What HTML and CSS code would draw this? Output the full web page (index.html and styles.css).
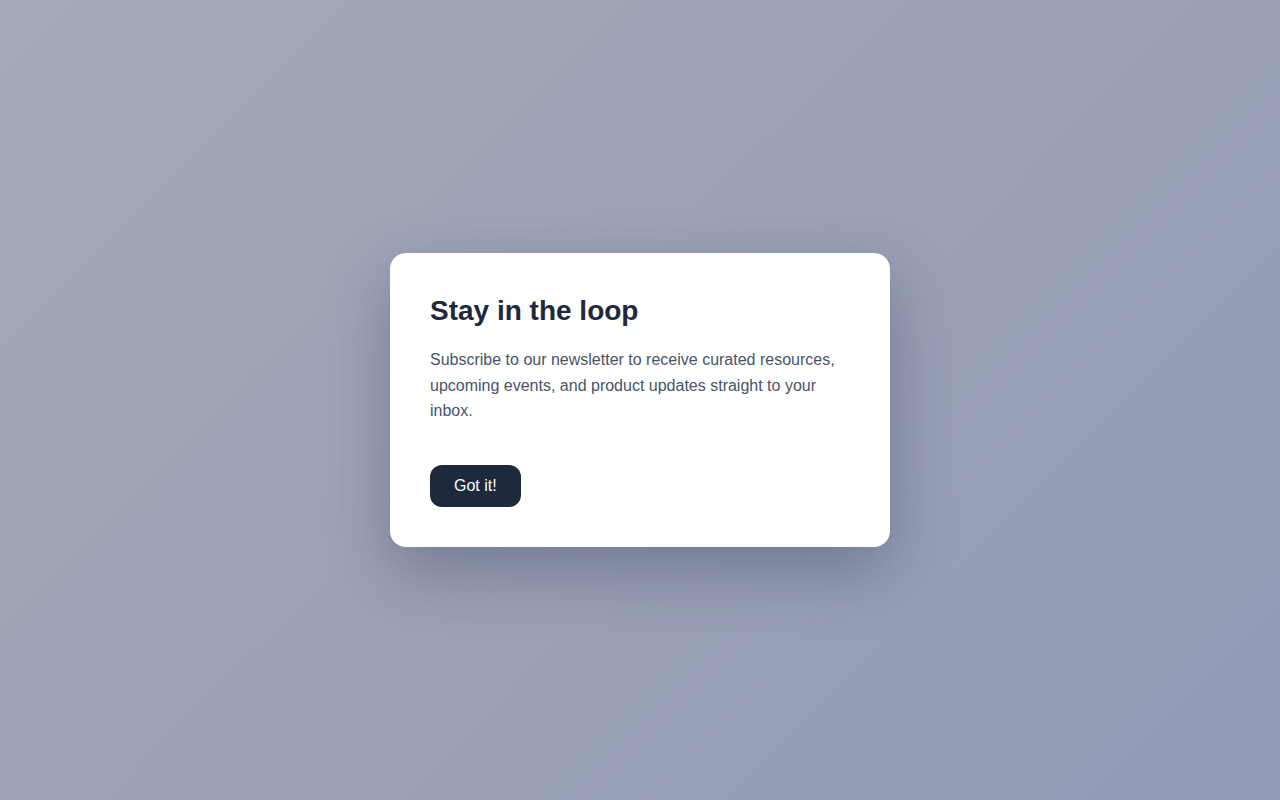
FILE: index.html
```html
<!DOCTYPE html>
<html lang="en">
<head>
<meta charset="utf-8">
<title>Stay in the loop</title>
<link rel="stylesheet" href="styles.css">
</head>
<body>
<div class="backdrop">
  <div class="card" role="dialog" aria-labelledby="t">
    <h1 id="t" class="title">Stay in the loop</h1>
    <p class="text">Subscribe to our newsletter to receive curated resources, upcoming events, and product updates straight to your inbox.</p>
    <button class="btn" type="button">Got it!</button>
  </div>
</div>
</body>
</html>
```
FILE: styles.css
```css
html, body {
  margin: 0;
  padding: 0;
  height: 100%;
}
body {
  font-family: "Liberation Sans", Arial, sans-serif;
}
.backdrop {
  height: 100vh;
  display: flex;
  align-items: center;
  justify-content: center;
  background: linear-gradient(135deg, #a4aab9 0%, #9ba2b6 50%, #929bb7 100%);
}
.card {
  width: 500px;
  box-sizing: border-box;
  padding: 40px;
  background: #ffffff;
  border-radius: 16px;
  box-shadow: 0 24px 64px rgba(30, 41, 70, 0.32);
  display: flex;
  flex-direction: column;
  align-items: flex-start;
}
.title {
  margin: 0 0 18px;
  font-size: 28px;
  line-height: 36px;
  font-weight: 700;
  color: #1e293b;
}
.text {
  margin: 0 0 41px;
  font-size: 16px;
  line-height: 25.6px;
  color: #475569;
}
.btn {
  font-family: inherit;
  font-size: 16px;
  line-height: 22px;
  padding: 10px 24px;
  border: 0;
  border-radius: 12px;
  background: #1e293b;
  color: #ffffff;
  cursor: pointer;
}
```
